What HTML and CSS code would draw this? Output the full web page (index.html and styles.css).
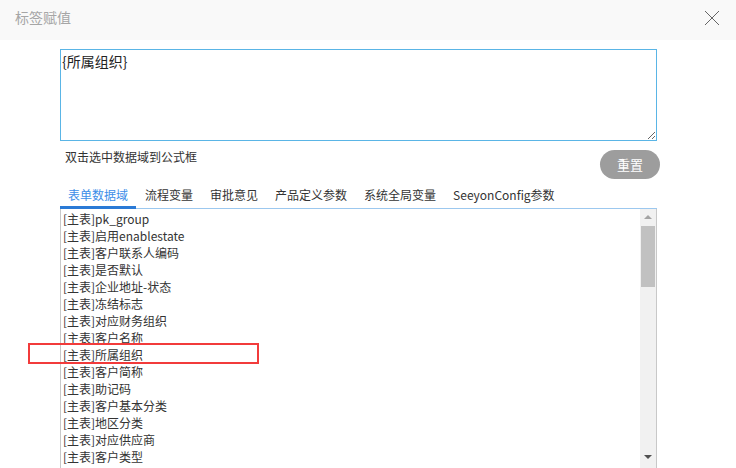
FILE: index.html
```html
<!DOCTYPE html>
<html lang="zh-CN">
<head>
<meta charset="utf-8">
<title>标签赋值</title>
<link rel="stylesheet" href="styles.css">
</head>
<body>
<div class="dialog">
  <div class="header">
    <span class="title">标签赋值</span>
    <svg class="close" width="16" height="16" viewBox="0 0 16 16"><path d="M1 1 L15 15 M15 1 L1 15" stroke="#666" stroke-width="1" fill="none"/></svg>
  </div>
  <div class="body">
    <textarea class="formula">{所属组织}</textarea>
    <div class="hint-row">
      <span class="hint">双击选中数据域到公式框</span>
      <button class="reset">重置</button>
    </div>
    <div class="tabs">
      <span class="tab active">表单数据域</span>
      <span class="tab">流程变量</span>
      <span class="tab">审批意见</span>
      <span class="tab">产品定义参数</span>
      <span class="tab">系统全局变量</span>
      <span class="tab">SeeyonConfig参数</span>
    </div>
    <div class="listbox">
      <ul class="items">
        <li>[主表]pk_group</li>
        <li>[主表]启用enablestate</li>
        <li>[主表]客户联系人编码</li>
        <li>[主表]是否默认</li>
        <li>[主表]企业地址-状态</li>
        <li>[主表]冻结标志</li>
        <li>[主表]对应财务组织</li>
        <li>[主表]客户名称</li>
        <li class="marked">[主表]所属组织<span class="redbox"></span></li>
        <li>[主表]客户简称</li>
        <li>[主表]助记码</li>
        <li>[主表]客户基本分类</li>
        <li>[主表]地区分类</li>
        <li>[主表]对应供应商</li>
        <li>[主表]客户类型</li>
      </ul>
      <div class="scrollbar">
        <div class="arrow up"></div>
        <div class="track"><div class="thumb"></div></div>
        <div class="arrow down"></div>
      </div>
    </div>
  </div>
</div>
</body>
</html>
```

FILE: styles.css
```css
* { box-sizing: border-box; }
html, body {
  margin: 0;
  padding: 0;
  background: #fff;
  overflow: hidden;
  height: 468px;
}
body {
  font-family: "Noto Sans CJK SC", "Noto Sans", sans-serif;
  color: #333;
}
.header {
  height: 40px;
  background: #f9f9f9;
  display: flex;
  align-items: center;
  justify-content: space-between;
  padding: 0 16px 0 15px;
}
.title {
  font-size: 14px;
  color: #a6a6a6;
  line-height: 20px;
  margin-top: -6px;
}
.close {
  display: block;
  margin-top: -5px;
}
.body {
  padding: 9px 0 0 60px;
  width: 660px;
}
.formula {
  display: block;
  width: 597px;
  height: 92px;
  border: 1px solid #5ab5e6;
  padding: 1px 1px;
  margin: 0;
  font-family: "Noto Sans CJK SC", "Noto Sans", sans-serif;
  font-size: 14px;
  line-height: 20px;
  color: #222;
  outline: none;
  resize: both;
}
.hint-row {
  display: flex;
  justify-content: space-between;
  align-items: flex-start;
  margin-top: 8px;
  height: 31px;
}
.hint {
  font-size: 12px;
  line-height: 16px;
  padding-left: 5px;
}
.reset {
  width: 60px;
  height: 29px;
  margin-top: 1px;
  border: none;
  border-radius: 15px;
  background: #9d9d9d;
  color: #fff;
  font-family: "Noto Sans CJK SC", sans-serif;
  font-size: 13px;
  padding: 0;
}
.tabs {
  display: flex;
  width: 597px;
  border-bottom: 1px solid #9cc8ef;
  height: 29px;
  gap: 1px;
}
.tab {
  font-size: 12px;
  line-height: 18px;
  padding: 6px 8px 0;
  height: 28px;
  color: #333;
}
.tab.active {
  color: #3d8ee8;
  border-bottom: 3px solid #2a7ad6;
  height: 29px;
  margin-bottom: -1px;
}
.listbox {
  display: flex;
  width: 597px;
  height: 270px;
  border-left: 1px solid #c8c8c8;
  border-right: 1px solid #c8c8c8;
}
.items {
  list-style: none;
  margin: 0;
  padding: 1px 0 0 2px;
  flex: 1;
  font-size: 12px;
  line-height: 17px;
  color: #333;
}
.items li {
  height: 17px;
  white-space: nowrap;
  position: relative;
}
.redbox {
  position: absolute;
  left: -35px;
  top: -3px;
  width: 231px;
  height: 21px;
  border: 2px solid #f23b3b;
}
.scrollbar {
  width: 16px;
  background: #f1f1f1;
  display: flex;
  flex-direction: column;
}
.arrow {
  height: 17px;
  position: relative;
}
.arrow.up::after, .arrow.down::after {
  content: "";
  position: absolute;
  left: 4px;
  border-left: 4px solid transparent;
  border-right: 4px solid transparent;
}
.arrow.up::after {
  top: 6px;
  border-bottom: 4px solid #a3a3a3;
}
.arrow.down::after {
  top: 6px;
  border-top: 4px solid #505050;
}
.track {
  flex: 0 0 auto;
  height: 223px;
  padding: 0 1px;
}
.thumb {
  height: 61px;
  background: #c1c1c1;
}
```
